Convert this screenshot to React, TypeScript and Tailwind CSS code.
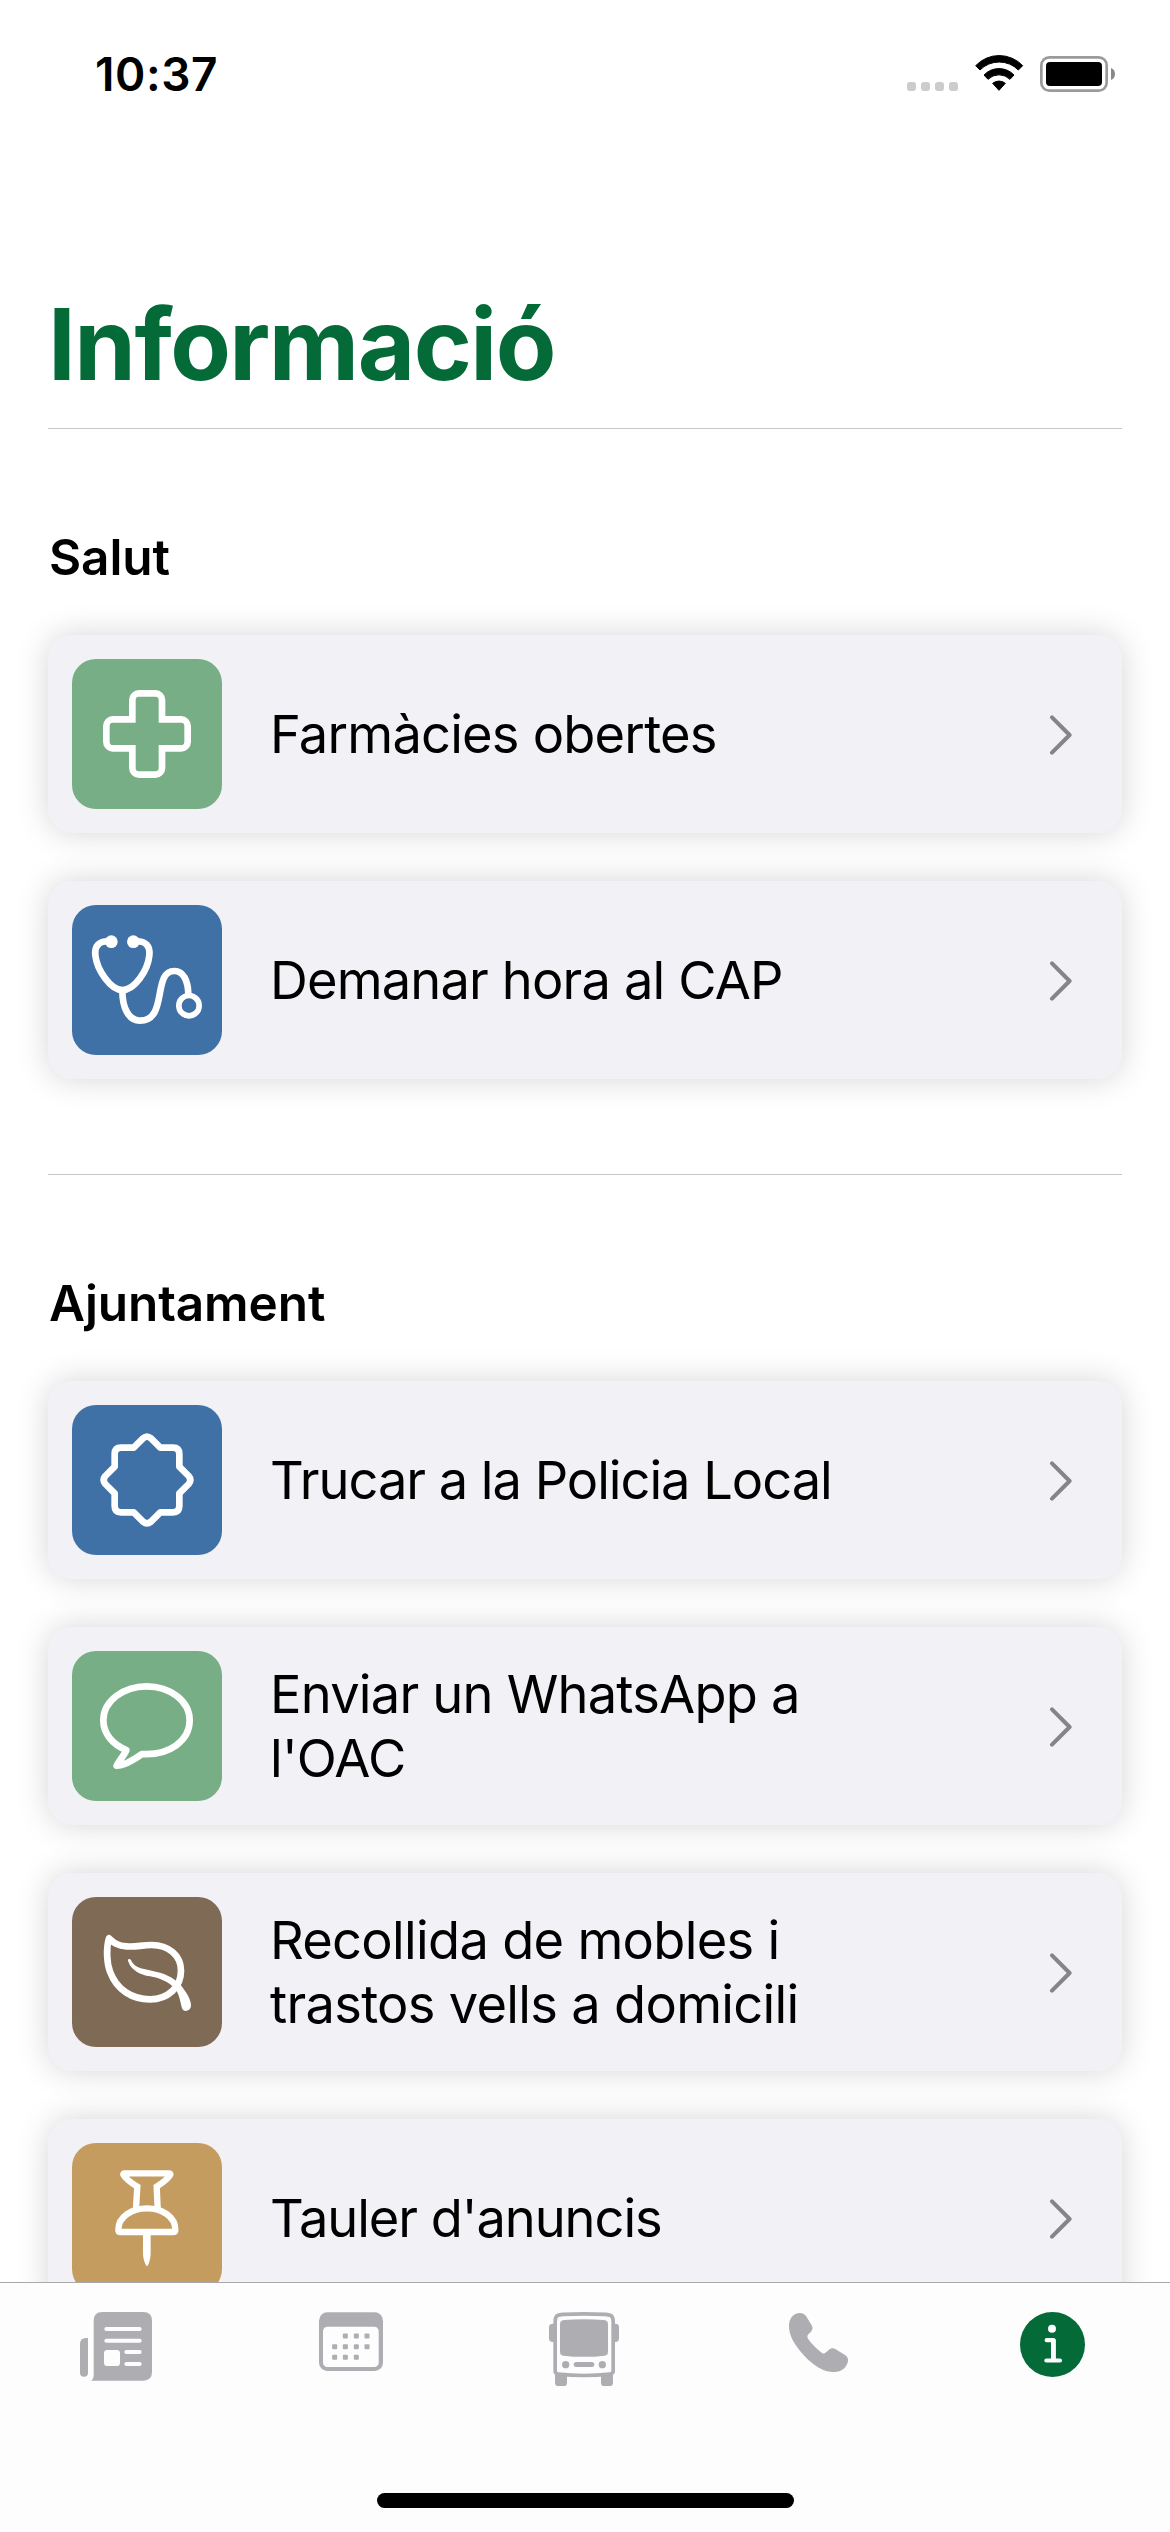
import type { ReactNode } from "react";

function StatusIcons() {
  return (
    <svg viewBox="0 0 780 270" className="h-[90px] w-[260px]">
      <g fill="#cccccc">
        <rect x="81" y="156" width="27" height="27" rx="9" />
        <rect x="123" y="156" width="27" height="27" rx="9" />
        <rect x="165" y="156" width="27" height="27" rx="9" />
        <rect x="207" y="156" width="27" height="27" rx="9" />
      </g>
      <g fill="#000" stroke="#000" strokeWidth="3" strokeLinejoin="round">
        <path d="M287 107A97 97 0 0 1 428 107L415 120A81 81 0 0 0 300 120Z" />
        <path d="M312 135A62 62 0 0 1 402 135L390 148A47 47 0 0 0 324 148Z" />
        <path d="M338 160A30 30 0 0 1 376 160L357 181Z" />
      </g>
      <rect x="484" y="82" width="196" height="100" rx="24" fill="none" stroke="#9a9a9a" strokeWidth="8" />
      <rect x="498" y="96" width="168" height="72" rx="12" />
      <path d="M693 114C709 119 709 145 693 150Z" fill="#888" />
    </svg>
  );
}

const lineIcon = {
  fill: "none",
  stroke: "#fff",
  strokeWidth: 20,
  strokeLinecap: "round" as const,
  className: "size-full",
};

function CrossIcon() {
  return (
    <svg {...lineIcon} viewBox="36 57 450 450">
      <path d="M217 238V180a20 20 0 0 1 20-20h49a20 20 0 0 1 20 20v58h57a20 20 0 0 1 20 20v47a20 20 0 0 1-20 20h-57v59a20 20 0 0 1-20 20h-49a20 20 0 0 1-20-20v-59h-58a20 20 0 0 1-20-20v-47a20 20 0 0 1 20-20Z" />
    </svg>
  );
}

function StethoscopeIcon() {
  return (
    <svg {...lineIcon} viewBox="36 45 450 450">
      <path d="M150 154C116 152 103 168 106 196C111 240 152 300 187 300C224 300 264 240 268 196C271 168 258 152 224 154" />
      <path d="M187 302C187 350 204 392 240 392C325 392 276 243 343 243C370 243 384 272 385 312" />
      <circle cx="387" cy="347" r="30.5" strokeWidth="17" />
      <circle cx="154" cy="155" r="19" fill="#fff" stroke="none" />
      <circle cx="220" cy="155" r="19" fill="#fff" stroke="none" />
    </svg>
  );
}

function SealIcon() {
  return (
    <svg {...lineIcon} viewBox="36 45 450 450" strokeLinejoin="round">
      <path d="M301 173L273 145Q261 135 249 145L221 173H183Q164 173 164 192V230L136 258Q126 270 136 282L164 310V348Q164 367 183 367H221L249 395Q261 405 273 395L301 367H339Q358 367 358 348V310L386 282Q396 270 386 258L358 230V192Q358 173 339 173Z" />
    </svg>
  );
}

function BubbleIcon() {
  return (
    <svg {...lineIcon} viewBox="36 783 450 450" strokeLinejoin="round">
      <path d="M246 1092C328 1097 389 1052 389 991C389 934 331 889 260 889S130 934 130 991C130 1030 156 1063 199 1080C196 1091 178 1111 170 1127C195 1127 225 1107 246 1092Z" />
    </svg>
  );
}

function LeafIcon() {
  return (
    <svg {...lineIcon} viewBox="36 51 450 450" strokeLinejoin="round">
      <path d="M147 175C138 205 140 248 150 275C170 330 217 358 270 358C325 358 363 320 363 272C363 226 325 195 275 195C245 195 225 202 200 199C172 197 163 189 147 175Z" />
      <path
        d="M204 242C203 236 210 235 213 241C223 262 240 265 275 272C310 279 340 290 362 315C378 335 393 358 393 375C393 396 369 397 366 385C360 360 357 343 347 328C325 304 298 294 270 289C240 284 212 270 204 242Z"
        fill="#fff"
        stroke="none"
      />
    </svg>
  );
}

function PinIcon() {
  return (
    <svg {...lineIcon} viewBox="36 789 450 450" strokeLinecap="butt">
      <path d="M228 985L232 920C214 909 196 896 190 884Q189 880 194 880H327Q332 880 331 884C325 896 307 909 290 920L293 985" strokeWidth="19" />
      <path d="M175 1049C175 1010 216 985 261 985S346 1010 346 1049Q346 1056 339 1056H182Q175 1056 175 1049Z" strokeWidth="19" />
      <path d="M249 1060H272V1122C271 1140 265 1158 261 1158S250 1140 249 1122Z" fill="#fff" stroke="none" />
    </svg>
  );
}

function Chevron() {
  return (
    <svg viewBox="0 0 24 42" className="h-[42px] w-6 shrink-0" fill="none" stroke="#858489" strokeWidth="4" strokeLinecap="round" strokeLinejoin="round">
      <path d="M3 4.3L20.600 22L3 39.700" />
    </svg>
  );
}

function Card({ color, icon, children }: { color: string; icon: ReactNode; children: ReactNode }) {
  return (
    <li className="flex h-[198px] items-center rounded-3xl bg-[#f2f1f6] pr-[49px] pl-6 shadow-[0_0_32px_rgba(0,0,0,0.17)]">
      <div className={`size-[150px] shrink-0 rounded-3xl ${color}`}>{icon}</div>
      <div className="ml-12 grow text-[52.4px] leading-[64.5px] whitespace-nowrap">{children}</div>
      <Chevron />
    </li>
  );
}

function Section({ title, children }: { title: string; children: ReactNode }) {
  return (
    <section className="border-t border-[#c6c6c8] pt-[98px]">
      <h2 className="ml-px text-[49.5px] leading-[60px] font-semibold tracking-[-0.1px]">{title}</h2>
      <ul className="mt-12 flex flex-col gap-12">{children}</ul>
    </section>
  );
}

function NewsIcon() {
  return (
    <svg viewBox="51 108 240 240" className="size-20" fill="#aeadb2">
      <path d="M84 204V308Q84 320 72 320T60 308V222Q60 204 78 204Z" />
      <path d="M93 332Q101 328 101 316V152Q101 126 127 126H250Q276 126 276 152V306Q276 332 250 332Z" />
      <g fill="#fdfdfd">
        <rect x="133" y="171" width="112" height="12" rx="6" />
        <rect x="133" y="206" width="112" height="12" rx="6" />
        <rect x="132" y="240" width="48" height="48" rx="10" />
        <rect x="193" y="240" width="52" height="12" rx="6" />
        <rect x="193" y="276" width="52" height="12" rx="6" />
      </g>
    </svg>
  );
}

const calendarDots = [
  [856, 198], [889, 198], [921, 198],
  [824, 230], [856, 230], [889, 230], [921, 230],
  [824, 262], [856, 262], [889, 262],
];

function CalendarIcon() {
  return (
    <svg viewBox="753 108 240 240" className="size-20" fill="#aeadb2">
      <rect x="777" y="127" width="192" height="176" rx="25" />
      <rect x="789" y="170" width="167" height="121" rx="13" fill="#fdfdfd" />
      {calendarDots.map(([x, y]) => (
        <rect key={`${x}-${y}`} x={x - 7.5} y={y - 7.5} width="15" height="15" rx="3" />
      ))}
    </svg>
  );
}

function BusIcon() {
  return (
    <svg viewBox="45 108 240 240" className="size-20 overflow-visible" fill="#aeadb2">
      <path d="M72 161H68Q57 161 57 172V205Q57 216 68 216H72Z" />
      <path d="M253 161H257Q267 161 267 172V205Q267 216 257 216H253Z" />
      <path d="M75 308H111V338Q111 348 101 348H85Q75 348 75 338Z" />
      <path d="M213 308H249V338Q249 348 239 348H223Q213 348 213 338Z" />
      <path
        d="M75.5 156C75.5 138 80 134 100 133Q162 130 225 133C245 134 249.5 138 249.5 156V304Q249.5 311 240 312Q162 321 84 312Q75.5 311 75.5 304Z"
        fill="#fdfdfd"
        stroke="#aeadb2"
        strokeWidth="11"
      />
      <path d="M90 163Q90 151 102 150Q162 145 222 150Q234 151 234 163V246Q234 255 224 257Q162 264 100 257Q90 255 90 246Z" />
      <circle cx="107" cy="284" r="11" />
      <circle cx="217" cy="284" r="11" />
      <rect x="131" y="276" width="62" height="15" rx="7.5" />
    </svg>
  );
}

function PhoneIcon() {
  return (
    <svg viewBox="747 108 240 240" className="size-20" fill="#aeadb2">
      <path d="M796 132C808 126 821 128 828 138L845 166Q851 176 843 185L835 193Q829 199 833 205C845 223 860 237 876 249Q882 253 888 247L897 239Q907 231 917 238L945 255Q956 262 954 274C950 293 935 306 912 306C880 306 850 287 820 254C793 224 777 197 777 168C777 151 784 139 796 132Z" />
    </svg>
  );
}

function InfoIcon() {
  return (
    <svg viewBox="99 108 240 240" className="size-20">
      <circle cx="217.500" cy="223.500" r="97.500" fill="#046b38" />
      <circle cx="216" cy="176" r="12" fill="#fdfdfd" />
      <path d="M200 210.500H220V271.500M199 271.500H240" fill="none" stroke="#fdfdfd" strokeWidth="12.500" strokeLinecap="round" strokeLinejoin="round" />
      <rect x="213" y="206" width="14.500" height="66" rx="4" fill="#fdfdfd" />
    </svg>
  );
}

export default function App() {
  return (
    <div className="flex h-[2532px] w-[1170px] flex-col overflow-hidden bg-white font-['Inter',sans-serif] text-black">
      <header className="flex h-[284px] shrink-0 items-start justify-between pt-[30px] pr-[30px] pl-[95px]">
        <time className="mt-4 text-[46px] leading-[56px] font-semibold tracking-[0.57px]">10:37</time>
        <StatusIcons />
      </header>

      <main className="min-h-0 grow overflow-hidden px-12">
        <h1 className="mb-6 text-[99px] leading-[120px] font-bold tracking-[-1.52px] text-[#046b38]">Informació</h1>

        <div className="flex flex-col gap-[95px]">
          <Section title="Salut">
            <Card color="bg-[#77ae85]" icon={<CrossIcon />}>
              <span className="tracking-[-0.78px]">Farmàcies obertes</span>
            </Card>
            <Card color="bg-[#3f70a6]" icon={<StethoscopeIcon />}>
              <span className="tracking-[-0.83px]">Demanar hora al CAP</span>
            </Card>
          </Section>

          <Section title="Ajuntament">
            <Card color="bg-[#3f70a6]" icon={<SealIcon />}>
              <span className="tracking-[-1.02px]">Trucar a la Policia Local</span>
            </Card>
            <Card color="bg-[#77ae85]" icon={<BubbleIcon />}>
              <span className="tracking-[-0.77px]">
                Enviar un WhatsApp a<br />
                l'OAC
              </span>
            </Card>
            <Card color="bg-[#7f6a55]" icon={<LeafIcon />}>
              <span className="tracking-[-0.7px]">
                Recollida de mobles i<br />
                trastos vells a domicili
              </span>
            </Card>
            <Card color="bg-[#c59c5f]" icon={<PinIcon />}>
              <span className="tracking-[-1.05px]">Tauler d'anuncis</span>
            </Card>
          </Section>
        </div>
      </main>

      <footer className="flex h-[250px] shrink-0 flex-col items-center justify-between border-t border-[#a9a8ad] bg-[#fdfdfd] pb-6">
        <nav className="grid w-full grid-cols-5 justify-items-center pt-[23px]">
          <NewsIcon />
          <CalendarIcon />
          <BusIcon />
          <PhoneIcon />
          <InfoIcon />
        </nav>
        <div className="h-[15px] w-[417px] rounded-full bg-black" />
      </footer>
    </div>
  );
}
